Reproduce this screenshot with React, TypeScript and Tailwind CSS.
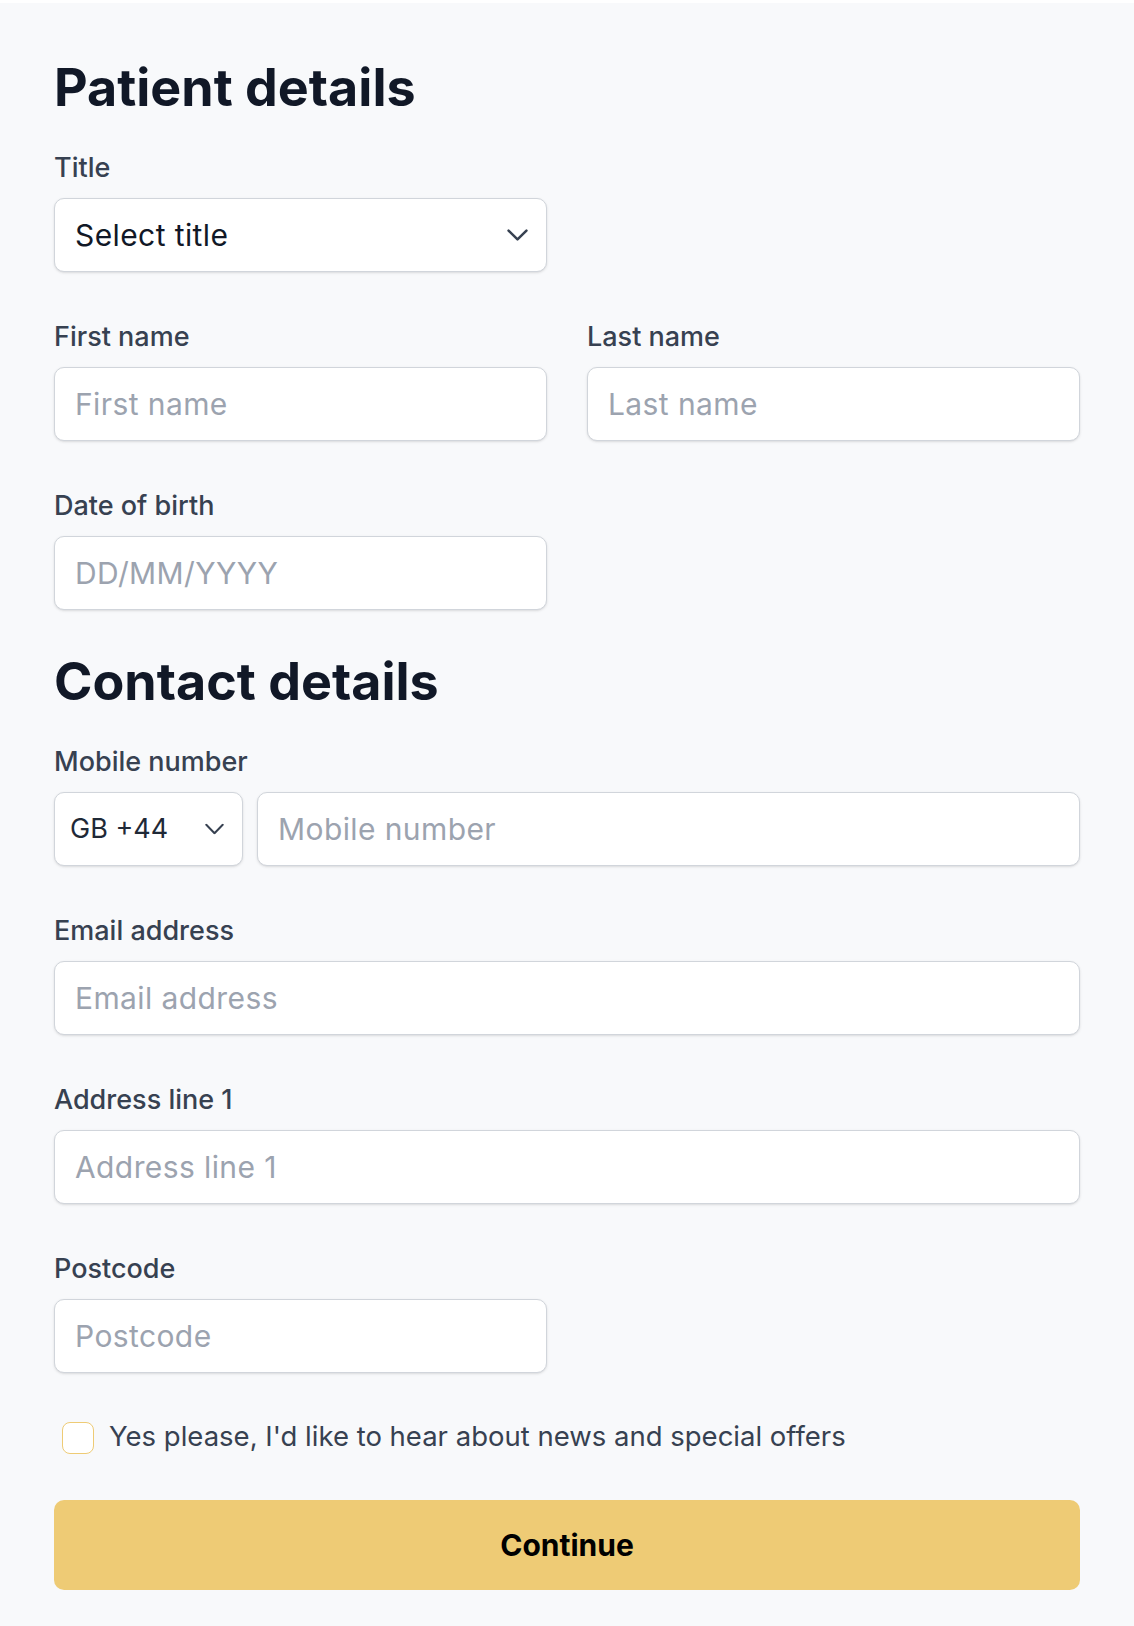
import React from 'react';

// Small chevron used inside the select boxes
const Chevron: React.FC<{ w: number; h: number; stroke: number }> = ({ w, h, stroke }) => {
    const o = stroke / 2 + 0.3;
    return (
        <svg width={w} height={h} viewBox={`0 0 ${w} ${h}`} fill="none">
            <path
                d={`M${o} ${o} L${w / 2} ${h - o} L${w - o} ${o}`}
                stroke="#374151"
                strokeWidth={stroke}
                strokeLinecap="round"
                strokeLinejoin="round"
            />
        </svg>
    );
};

const Label: React.FC<{ children: React.ReactNode }> = ({ children }) => (
    <label className="block mb-[10px] text-[27px] leading-[40px] font-medium text-[#374151]">{children}</label>
);

const inputCls =
    "block w-full h-[74px] px-5 rounded-[10px] border border-[#d1d5db] bg-white shadow-sm text-[30px] tracking-[0.4px] text-[#111827] placeholder:text-[#9ca3af] outline-none";

const Field: React.FC<{ label: string; placeholder: string; className?: string }> = ({ label, placeholder, className }) => (
    <div className={className}>
        <Label>{label}</Label>
        <input type="text" placeholder={placeholder} className={inputCls} />
    </div>
);

export default function App() {
    const [title, setTitle] = React.useState('');
    const [optIn, setOptIn] = React.useState(false);

    return (
        <div className="bg-white pt-[3px] font-['Inter',sans-serif]">
            <div className="bg-[#f8f9fb] px-[54px] pt-[53px] pb-9">
                <h2 className="text-[52px] leading-[64px] font-bold text-[#111827] mb-7">Patient details</h2>

                <div className="w-[493px]">
                    <Label>Title</Label>
                    <div className="relative">
                        <select
                            value={title}
                            onChange={(e) => setTitle(e.target.value)}
                            className="block w-full h-[74px] pl-5 pr-14 rounded-[10px] border border-[#d1d5db] bg-white shadow-sm text-[30px] tracking-[0.4px] text-[#111827] appearance-none outline-none"
                        >
                            <option value="">Select title</option>
                            <option>Mr</option>
                            <option>Mrs</option>
                            <option>Miss</option>
                            <option>Ms</option>
                            <option>Dr</option>
                        </select>
                        <span className="pointer-events-none absolute right-[19px] top-1/2 -translate-y-1/2 flex">
                            <Chevron w={21} h={12} stroke={2.5} />
                        </span>
                    </div>
                </div>

                <div className="grid grid-cols-2 gap-x-10 mt-[45px]">
                    <Field label="First name" placeholder="First name" />
                    <Field label="Last name" placeholder="Last name" />
                </div>

                <Field label="Date of birth" placeholder="DD/MM/YYYY" className="w-[493px] mt-[45px]" />

                <h2 className="text-[52px] leading-[64px] font-bold text-[#111827] mt-10 mb-7">Contact details</h2>

                <div>
                    <Label>Mobile number</Label>
                    <div className="flex gap-[14px]">
                        <div className="relative w-[189px] shrink-0">
                            <select className="block w-full h-[74px] pl-[15px] pr-10 rounded-[10px] border border-[#d1d5db] bg-white shadow-sm text-[27px] text-[#1f2937] appearance-none outline-none">
                                <option>GB +44</option>
                                <option>IE +353</option>
                                <option>US +1</option>
                            </select>
                            <span className="pointer-events-none absolute right-[19px] top-1/2 -translate-y-1/2 flex">
                                <Chevron w={19} h={11} stroke={2} />
                            </span>
                        </div>
                        <input type="tel" placeholder="Mobile number" className={inputCls} />
                    </div>
                </div>

                <Field label="Email address" placeholder="Email address" className="mt-[45px]" />
                <Field label="Address line 1" placeholder="Address line 1" className="mt-[45px]" />
                <Field label="Postcode" placeholder="Postcode" className="w-[493px] mt-[45px]" />

                <label className="flex items-start gap-[15px] mt-[43px] ml-2 cursor-pointer">
                    <input
                        type="checkbox"
                        checked={optIn}
                        onChange={(e) => setOptIn(e.target.checked)}
                        className="mt-[6px] w-8 h-8 shrink-0 appearance-none rounded-[8px] border border-[#eecb75] bg-white checked:bg-[#eecb75]"
                    />
                    <span className="text-[27.5px] leading-[40px] text-[#374151]">
                        Yes please, I'd like to hear about news and special offers
                    </span>
                </label>

                <button className="mt-[44px] w-full h-[90px] rounded-[10px] bg-[#eecb75] text-[30px] font-bold text-black">
                    Continue
                </button>
            </div>
        </div>
    );
}
